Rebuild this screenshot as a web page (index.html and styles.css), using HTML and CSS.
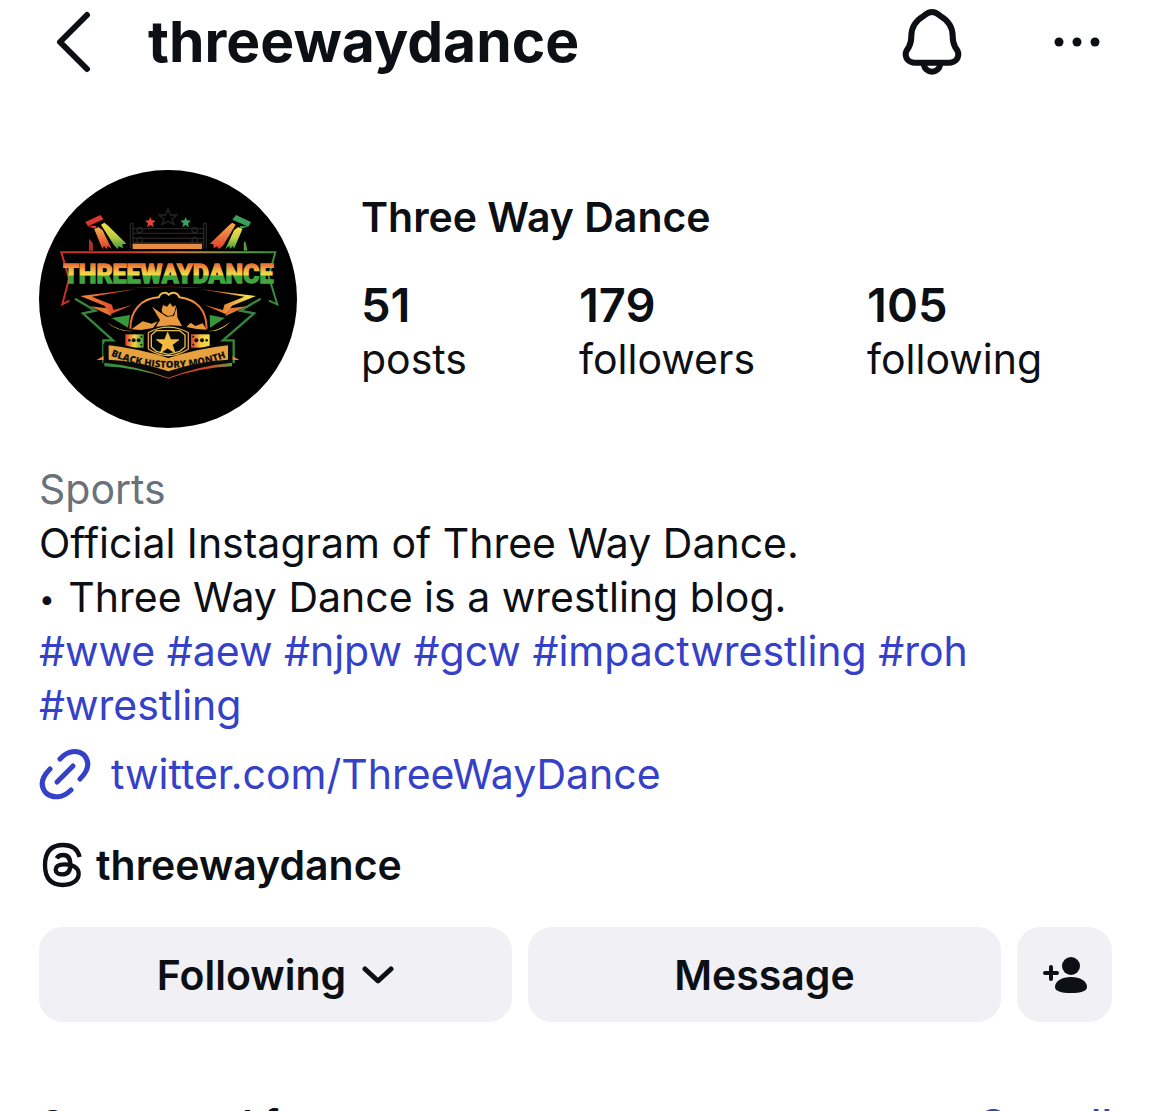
FILE: index.html
```html
<!DOCTYPE html>
<html lang="en">
<head>
  <meta charset="UTF-8" />
  <meta name="viewport" content="width=device-width, initial-scale=1" />
  <title>threewaydance</title>
  <link rel="stylesheet" href="styles.css">
</head>
<body>
  <header class="topbar">
    <button class="icon-btn back" aria-label="Back">
      <svg width="40" height="64" viewBox="0 0 40 64" fill="none" stroke="currentColor" stroke-width="6" stroke-linecap="round" stroke-linejoin="round">
        <path d="M35 5 8 32l27 27" />
      </svg>
    </button>
    <h1 class="username">threewaydance</h1>
    <button class="icon-btn bell" aria-label="Notifications">
      <svg width="60" height="68" viewBox="69 24 180 204" fill="none" stroke="currentColor" stroke-width="18" stroke-linejoin="round">
        <path d="M159 36c-12 0-18 6-25 12-24 14-37 34-37 60 0 16-2 24-8 34-6 8-9 13-9 20 0 16 12 26 27 26h104c15 0 27-10 27-26 0-7-3-12-9-20-6-10-8-18-8-34 0-26-13-46-37-60-7-6-13-12-25-12Z" />
        <path d="M134 192c2 14 12 23 25 23s23-9 25-23" />
      </svg>
    </button>
    <button class="icon-btn more" aria-label="More options">
      <svg width="46" height="12" viewBox="0 0 92 24" fill="currentColor">
        <circle cx="10" cy="12" r="9" />
        <circle cx="46" cy="12" r="9" />
        <circle cx="82" cy="12" r="9" />
      </svg>
    </button>
  </header>

  <main class="profile">
    <section class="summary">
      <svg class="avatar" viewBox="27 30 774 774" role="img" aria-label="Three Way Dance logo">
        <defs>
          <linearGradient id="rasta" gradientUnits="userSpaceOnUse" x1="0" y1="300" x2="0" y2="380">
            <stop offset="0" stop-color="#e2412a" />
            <stop offset="0.450" stop-color="#f3c745" />
            <stop offset="0.560" stop-color="#e9df45" />
            <stop offset="0.600" stop-color="#39a33c" />
            <stop offset="1" stop-color="#46a83f" />
          </linearGradient>
          <linearGradient id="frame" gradientUnits="userSpaceOnUse" x1="92" y1="0" x2="745" y2="0">
            <stop offset="0" stop-color="#c92f2b" />
            <stop offset="0.300" stop-color="#c9392b" />
            <stop offset="0.550" stop-color="#cf7a3a" />
            <stop offset="0.850" stop-color="#5d9a41" />
            <stop offset="1" stop-color="#35873d" />
          </linearGradient>
          <linearGradient id="base" gradientUnits="userSpaceOnUse" x1="222" y1="0" x2="610" y2="0">
            <stop offset="0" stop-color="#35873d" />
            <stop offset="0.300" stop-color="#4f9a3f" />
            <stop offset="0.500" stop-color="#d8452d" />
            <stop offset="0.800" stop-color="#d8452d" />
            <stop offset="1" stop-color="#5d9a41" />
          </linearGradient>
          <linearGradient id="hot" gradientUnits="userSpaceOnUse" x1="150" y1="0" x2="680" y2="0">
            <stop offset="0" stop-color="#f08b3c" />
            <stop offset="0.200" stop-color="#e14a2c" />
            <stop offset="0.500" stop-color="#f3c94a" />
            <stop offset="0.750" stop-color="#e25a30" />
            <stop offset="0.950" stop-color="#f2e24a" />
          </linearGradient>
          <linearGradient id="beamGreen" x1="0" y1="0" x2="0" y2="1">
            <stop offset="0" stop-color="#f4e04d" />
            <stop offset="0.500" stop-color="#c2cf45" />
            <stop offset="1" stop-color="#3f9c3c" />
          </linearGradient>
          <linearGradient id="beamRed" x1="0" y1="0" x2="0" y2="1">
            <stop offset="0" stop-color="#f6b04a" />
            <stop offset="1" stop-color="#de3e2a" />
          </linearGradient>
          <linearGradient id="strapLeft">
            <stop offset="0" stop-color="#e0402b" />
            <stop offset="0.500" stop-color="#f0d846" />
            <stop offset="1" stop-color="#3c9c3d" />
          </linearGradient>
          <linearGradient id="strapRight">
            <stop offset="0" stop-color="#dc3b2b" />
            <stop offset="0.500" stop-color="#f3c744" />
            <stop offset="1" stop-color="#f0e04a" />
          </linearGradient>
          <path id="ribbonText" d="M242 587Q415 658 596 590" />
        </defs>

        <circle cx="414" cy="417" r="387" fill="#000" />

        <!-- ring and stars -->
        <g fill="none" stroke="#242424" stroke-width="4">
          <path d="M414 147l7 18h20l-15 12 6 17-18-10-18 10 6-17-15-12h20Z" />
          <path d="M301 265v-75h8v75M529 265v-75h-8v75M310 206h210M310 220h210M310 235h210M310 248h210" />
          <circle cx="329" cy="210" r="8" /><circle cx="329" cy="240" r="8" />
          <circle cx="494" cy="210" r="8" /><circle cx="494" cy="240" r="8" />
        </g>
        <path d="M361 171l4 10 12 1-9 8 3 12-10-7-10 7 3-12-9-8 12-1Z" fill="#e8453a" />
        <path d="M467 171l4 10 12 1-9 8 3 12-10-7-10 7 3-12-9-8 12-1Z" fill="#3aa35c" />
        <path d="M308 251h208v16H308Z" fill="#e98a42" />

        <!-- spotlights -->
        <path d="M166 186l45-21 10 13-47 21Z" fill="#d9392e" />
        <path d="M174 198l22 9 4-10Z" fill="#d9392e" />
        <path d="M193 208l12-7 13 10 27 56-12-9-3 9-8-9-5 9Z" fill="url(#beamRed)" />
        <path d="M213 194l10-6 10 8 56 55-12 2 2 12-13-6-3 8-10-10Z" fill="url(#beamGreen)" />
        <path d="M618 165l45 21-8 14-48-21Z" fill="#3d9d58" />
        <path d="M655 199l-23 9-3-10Z" fill="#3d9d58" />
        <path d="M617 194l-10-6-10 8-57 55 10 2 1 12 11-6 4 8 13-10Z" fill="url(#beamRed)" />
        <path d="M637 208l-12-7-13 10-26 56 12-9 2 9 9-9 3 9Z" fill="url(#beamGreen)" />

        <!-- name plate -->
        <path d="M180 272v-28l6 8v20M650 272l-6-26v26" fill="none" stroke="url(#frame)" stroke-width="5" />
        <path d="M118 422 97 433l20-77-23-79h642l-20 72 26 84-25-11" fill="none" stroke="url(#frame)" stroke-width="6" />
        <text class="logo-name" x="415" y="370" text-anchor="middle" fill="url(#rasta)" stroke="url(#rasta)">THREEWAYDANCE</text>

        <!-- wings -->
        <path d="M135 416l61 36-37 8 90 81h-29v68M692 416l-61 36 41 8-93 81h32v68" fill="none" stroke="#35873d" stroke-width="7" />
        <path d="M151 408l165-20-130 22 60 24 4 16 56-15-65 28-18-26Z" fill="url(#hot)" />
        <path d="M678 408l-165-20 130 22-60 24-4 16-56-15 65 28 18-26Z" fill="url(#hot)" />
        <path d="M180 439l51 6 14 24Z" fill="#e27636" />
        <path d="M650 439l-51 6-14 24Z" fill="#e27636" />
        <path d="M245 474l55-9-6 38Z" fill="#38963d" />
        <path d="M585 474l-46-9 1 38Z" fill="#38963d" />
        <path d="M300 384q115-8 230 0l-115-3Z" fill="#cf382c" />
        <path d="M228 485q42 30 82 28-44 4-82-28ZM602 485q-42 30-68 28 36 4 68-28Z" fill="#ecd846" />

        <!-- wrestlers -->
        <path d="M301 506c0-53 32-91 85-94 6-16 23-17 30-8 12-10 28-6 32 8 54 7 81 41 82 94" fill="#000" stroke="url(#hot)" stroke-width="6" />
        <path d="M399 435l12 5 9-11 8 11 10-4-4 19-6 11-15 2-16-10-2-8Z" fill="#e99a3e" />
        <path d="M304 508l34-24 27 7 18-7-14 20-36 6Z" fill="#e99a3e" />
        <path d="M482 488l14 10 22-8 12 19-30-2-31-6Z" fill="#e99a3e" />
        <path d="M366 440l22 16 22 14 22-2 8-26 2 30 14 26-34-2-44 4 12-20Z" fill="#e99a3e" />

        <!-- belt -->
        <path d="M286 523h55v40h-55Z" fill="url(#strapLeft)" />
        <path d="M483 523h56v40h-56Z" fill="url(#strapRight)" />
        <g fill="#111">
          <circle cx="298" cy="541" r="4" /><circle cx="311" cy="541" r="6" /><circle cx="326" cy="541" r="6" />
          <circle cx="334" cy="530" r="3" /><circle cx="334" cy="554" r="3" />
          <circle cx="499" cy="541" r="6" /><circle cx="516" cy="541" r="6" /><circle cx="530" cy="541" r="4" />
          <circle cx="490" cy="530" r="3" /><circle cx="490" cy="554" r="3" />
        </g>

        <!-- ribbon -->
        <path d="M220 553l8-7q94 13 188 50 91-38 190-50v68q-96 5-191 40-97-36-195-40Z" fill="#080808" />
        <path d="M236 556q91 10 179 38 88-28 179-38v43q-92 5-179 35-85-30-179-35Z" fill="#e6a23e" />
        <path d="M223 608q99 10 192 45 94-36 191-45v11q-98 4-191 37-94-33-192-37Z" fill="url(#base)" />
        <path d="M221 588v12h-22ZM608 588v12h20Z" fill="#ef7d35" />
        <path d="M355 518q60-33 120 0v49q-60 40-120 0Z" fill="#080808" stroke="url(#hot)" stroke-width="4" />
        <path d="M364 525l15-13h70l16 13v36l-16 13-34 9-36-9-15-13Z" fill="none" stroke="#d9be50" stroke-width="4" />
        <path d="M413 517l9 22h25l-20 15 8 25-22-15-22 15 8-25-20-15h25Z" fill="#f5b83e" stroke="#f6dc4b" stroke-width="2" />
        <text class="logo-ribbon"><textPath href="#ribbonText">BLACK HISTORY MONTH</textPath></text>
      </svg>

      <div class="details">
        <h2 class="name">Three Way Dance</h2>
        <ul class="stats">
          <li><strong>51</strong><span>posts</span></li>
          <li><strong>179</strong><span>followers</span></li>
          <li><strong>105</strong><span>following</span></li>
        </ul>
      </div>
    </section>

    <section class="bio">
      <p class="category">Sports</p>
      <p>Official Instagram of Three Way Dance.</p>
      <p><span class="bullet">•</span> Three Way Dance is a wrestling blog.</p>
      <p class="tags">
        <a href="#wwe">#wwe</a> <a href="#aew">#aew</a> <a href="#njpw">#njpw</a> <a href="#gcw">#gcw</a>
        <a href="#impactwrestling">#impactwrestling</a> <a href="#roh">#roh</a><br>
        <a href="#wrestling">#wrestling</a>
      </p>
    </section>

    <a class="website" href="https://twitter.com/ThreeWayDance">
      <svg width="52" height="52" viewBox="0 0 52 52" fill="none" stroke="currentColor" stroke-width="5" stroke-linecap="round">
        <path d="M21 11C28 3 38 1 45 7c6 7 5 15-4 24" />
        <path d="M11 21C2 30 1 38 7 45c7 6 17 5 25-3" />
        <path d="M18 34l16-16" />
      </svg>
      twitter.com/ThreeWayDance
    </a>

    <a class="threads" href="#threads">
      <svg width="40" height="46" viewBox="20 21 120 138" fill="none" stroke="currentColor" stroke-width="13">
        <path d="M133 66C127 42 112 30 84 30 48 30 29 50 29 90s19 60 54 60c28 0 47-14 47-34 0-18-18-28-42-28-18 0-27 6-27 16 0 9 9 14 20 14 16 0 24-11 24-29 0-19-6-29-21-29-9 0-16 3-20 10" />
      </svg>
      threewaydance
    </a>

    <div class="actions">
      <button class="btn">
        Following
        <svg width="32" height="20" viewBox="0 0 32 20" fill="none" stroke="currentColor" stroke-width="5" stroke-linecap="round" stroke-linejoin="round">
          <path d="M3 4l13 12L29 4" />
        </svg>
      </button>
      <button class="btn">Message</button>
      <button class="btn btn-square" aria-label="Similar accounts">
        <svg width="46" height="38" viewBox="0 0 46 38" fill="currentColor">
          <circle cx="29" cy="10" r="9" />
          <path d="M13 31c0-6 7-10 16-10s16 4 16 10c0 4-6 6-16 6s-16-2-16-6Z" />
          <path d="M9 11v12M3 17h12" stroke="currentColor" stroke-width="4" stroke-linecap="round" />
        </svg>
      </button>
    </div>

    <section class="suggested">
      <h2>Suggested for you</h2>
      <a href="#all">See all</a>
    </section>
  </main>
</body>
</html>
```
FILE: styles.css
```css
* {
  box-sizing: border-box;
}

body {
  margin: 0;
  background-color: #fff;
  color: #0c1014;
  font-family: Inter, "Liberation Sans", sans-serif;
  font-size: 41px;
  line-height: 54px;
}

h1, h2, p, ul {
  margin: 0;
  padding: 0;
}

h2 {
  font-size: 41px;
  font-weight: 600;
}

a {
  color: #3441c8;
  text-decoration: none;
}

svg {
  display: block;
  flex-shrink: 0;
}

button {
  border: 0;
  color: inherit;
  font: inherit;
  cursor: pointer;
}

.topbar {
  display: flex;
  align-items: center;
  height: 84px;
  padding: 0 60px 0 52px;
}

.icon-btn {
  padding: 0;
  background: none;
}

.username {
  flex: 1;
  margin-left: 56px;
  font-size: 57px;
  font-weight: 700;
  line-height: 72px;
}

.more {
  margin-left: 92px;
}

.profile {
  padding: 86px 48px 0 39px;
}

.summary {
  display: flex;
  align-items: flex-start;
  gap: 64px;
}

.avatar {
  width: 258px;
  height: 258px;
}

.logo-name {
  font-family: Roboto, sans-serif;
  font-size: 75px;
  font-weight: 800;
  stroke-width: 4px;
}

.logo-ribbon {
  fill: #111;
  font-family: "Open Sans", sans-serif;
  font-size: 29px;
  font-weight: 800;
}

.details {
  padding-top: 20px;
}

.stats {
  display: flex;
  gap: 112px;
  margin-top: 34px;
  list-style: none;
}

.stats li {
  display: flex;
  flex-direction: column;
}

.stats strong {
  font-size: 47px;
  font-weight: 600;
}

.bio {
  margin-top: 34px;
}

.category {
  color: #6a717a;
}

.bullet {
  margin-right: 2px;
  font-size: 28px;
  line-height: 1;
  vertical-align: 3px;
}

.website,
.threads {
  display: flex;
  align-items: center;
}

.website {
  gap: 20px;
  margin-top: 15px;
}

.threads {
  gap: 14px;
  margin-top: 37px;
  padding-left: 3px;
  color: inherit;
  font-weight: 600;
}

.actions {
  display: flex;
  gap: 16px;
  margin-top: 35px;
}

.btn {
  display: flex;
  flex: 1;
  align-items: center;
  justify-content: center;
  gap: 16px;
  height: 95px;
  padding: 0;
  border-radius: 24px;
  background-color: #f0f0f5;
  font-weight: 600;
}

.btn-square {
  flex: 0 0 95px;
}

.suggested {
  display: flex;
  justify-content: space-between;
  margin-top: 76px;
  font-size: 42px;
}

.suggested a {
  font-weight: 500;
}
```
